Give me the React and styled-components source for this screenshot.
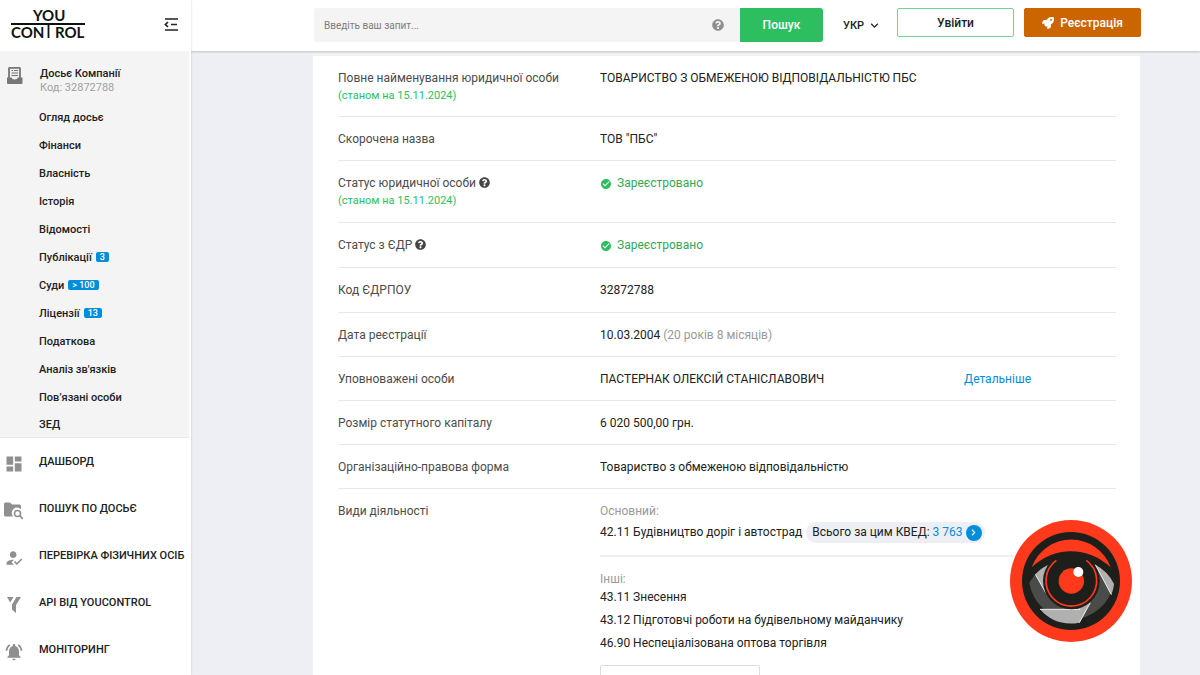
import { useState } from "react";
import styled, { createGlobalStyle } from "styled-components";
import {
  MdCheckCircle,
  MdDashboard,
  MdHowToReg,
  MdKeyboardArrowDown,
  MdNotificationsActive,
} from "react-icons/md";
import { FaChevronRight, FaQuestionCircle, FaRocket } from "react-icons/fa";

const dossierLinks = [
  { label: "Огляд досьє" },
  { label: "Фінанси" },
  { label: "Власність" },
  { label: "Історія" },
  { label: "Відомості" },
  { label: "Публікації", badge: "3" },
  { label: "Суди", badge: "> 100" },
  { label: "Ліцензії", badge: "13" },
  { label: "Податкова" },
  { label: "Аналіз зв'язків" },
  { label: "Пов’язані особи" },
  { label: "ЗЕД" },
];

const menuLinks = [
  { label: "ДАШБОРД", icon: <MdDashboard size={20} /> },
  { label: "ПОШУК ПО ДОСЬЄ", icon: <FolderSearch /> },
  { label: "ПЕРЕВІРКА ФІЗИЧНИХ ОСІБ", icon: <MdHowToReg size={20} /> },
  { label: "API ВІД YOUCONTROL", icon: <ApiIcon /> },
  { label: "МОНІТОРИНГ", icon: <MdNotificationsActive size={20} /> },
];

const otherActivities = [
  "43.11 Знесення",
  "43.12 Підготовчі роботи на будівельному майданчику",
  "46.90 Неспеціалізована оптова торгівля",
];

export default function App() {
  return (
    <>
      <GlobalStyle />
      <Page>
        <Sidebar />
        <Main>
          <Header />
          <Content>
            <CompanyCard />
          </Content>
        </Main>
      </Page>
      <EyeBadge>
        <EyeLogo />
      </EyeBadge>
    </>
  );
}

function Sidebar() {
  return (
    <Aside>
      <SideTop>
        <a href="#home" aria-label="YouControl">
          <Logo />
        </a>
        <IconButton type="button" aria-label="Згорнути меню">
          <CollapseIcon />
        </IconButton>
      </SideTop>
      <Dossier>
        <DossierHead>
          <ArchiveIcon />
          <div>
            <DossierTitle>Досьє Компанії</DossierTitle>
            <DossierCode>Код: 32872788</DossierCode>
          </div>
        </DossierHead>
        {dossierLinks.map((item) => (
          <DossierLink href="#dossier" key={item.label}>
            {item.label}
            {item.badge && <Badge>{item.badge}</Badge>}
          </DossierLink>
        ))}
      </Dossier>
      <Menu>
        {menuLinks.map((item) => (
          <MenuLink href="#menu" key={item.label}>
            <MenuIcon>{item.icon}</MenuIcon>
            {item.label}
          </MenuLink>
        ))}
      </Menu>
    </Aside>
  );
}

function Header() {
  const [query, setQuery] = useState("");

  return (
    <TopBar>
      <SearchForm onSubmit={(e) => e.preventDefault()}>
        <SearchField>
          <SearchInput
            type="text"
            aria-label="Пошук"
            placeholder="Введіть ваш запит..."
            value={query}
            onChange={(e) => setQuery(e.target.value)}
          />
          <FaQuestionCircle size={12} color="#8f8f8f" />
        </SearchField>
        <SearchButton type="submit">Пошук</SearchButton>
      </SearchForm>
      <LangButton type="button">
        УКР
        <MdKeyboardArrowDown size={15} />
      </LangButton>
      <AuthButtons>
        <LoginButton type="button">Увійти</LoginButton>
        <RegisterButton type="button">
          <FaRocket size={12} />
          Реєстрація
        </RegisterButton>
      </AuthButtons>
    </TopBar>
  );
}

function CompanyCard() {
  return (
    <Card>
      <Row>
        <Label>
          Повне найменування юридичної особи
          <Note>(станом на 15.11.2024)</Note>
        </Label>
        <Value>ТОВАРИСТВО З ОБМЕЖЕНОЮ ВІДПОВІДАЛЬНІСТЮ ПБС</Value>
      </Row>
      <Row>
        <Label>Скорочена назва</Label>
        <Value>ТОВ "ПБС"</Value>
      </Row>
      <Row $tall>
        <Label>
          Статус юридичної особи <HelpIcon />
          <Note>(станом на 15.11.2024)</Note>
        </Label>
        <Value>
          <Status />
        </Value>
      </Row>
      <Row $tall>
        <Label>
          Статус з ЄДР <HelpIcon />
        </Label>
        <Value>
          <Status />
        </Value>
      </Row>
      <Row $tall>
        <Label>Код ЄДРПОУ</Label>
        <Value>32872788</Value>
      </Row>
      <Row>
        <Label>Дата реєстрації</Label>
        <Value>
          10.03.2004 <Muted>(20 років 8 місяців)</Muted>
        </Value>
      </Row>
      <Row>
        <Label>Уповноважені особи</Label>
        <SplitValue>
          ПАСТЕРНАК ОЛЕКСІЙ СТАНІСЛАВОВИЧ
          <TextLink href="#details">Детальніше</TextLink>
        </SplitValue>
      </Row>
      <Row>
        <Label>Розмір статутного капіталу</Label>
        <Value>6 020 500,00 грн.</Value>
      </Row>
      <Row>
        <Label>Організаційно-правова форма</Label>
        <Value>Товариство з обмеженою відповідальністю</Value>
      </Row>
      <Row>
        <Label>Види діяльності</Label>
        <Value>
          <MainActivity>
            <Muted>Основний:</Muted>
            <ActivityLine>
              42.11 Будівництво доріг і автострад
              <Pill>
                Всього за цим КВЕД:
                <PillLink href="#kved">
                  3 763
                  <Arrow>
                    <FaChevronRight size={7} />
                  </Arrow>
                </PillLink>
              </Pill>
            </ActivityLine>
          </MainActivity>
          <Muted>Інші:</Muted>
          <ActivityList>
            {otherActivities.map((name) => (
              <li key={name}>{name}</li>
            ))}
          </ActivityList>
          <MoreButton type="button" aria-label="Показати всі" />
        </Value>
      </Row>
    </Card>
  );
}

function Status() {
  return (
    <StatusText>
      <MdCheckCircle size={12} />
      Зареєстровано
    </StatusText>
  );
}

function Logo() {
  return (
    <LogoSvg width="78" height="38" viewBox="0 0 78 38">
      <text x="23" y="15">YOU</text>
      <text x="1" y="32">CON</text>
      <text x="45" y="32">ROL</text>
      <path d="M1 18H75M38.500 18V32" stroke="#111" strokeWidth="1.8" />
    </LogoSvg>
  );
}

function CollapseIcon() {
  return (
    <svg width="14" height="14" viewBox="0 0 14 14" fill="none" stroke="#222" strokeWidth="1.7">
      <path d="M1 1H14M7 6.500H13M1 12H14" />
      <path d="M4 4L1.400 6.500L4 9" />
    </svg>
  );
}

function ArchiveIcon() {
  return (
    <svg width="16" height="18" viewBox="0 0 16 18">
      <path d="M2 11V1.500Q2 .8 2.700 .8H12.300Q13 .8 13 1.500V11" fill="#eee" stroke="#777" strokeWidth="1.800" />
      <path d="M4.500 3.500H6M7 3.500H11M4.500 6H11M4.500 8.500H11" stroke="#777" />
      <path d="M0 10.500H4.500Q5 12.500 7.500 12.500Q10.500 12.500 11 10.500H15.500V16Q15.500 17 14.500 17H1Q0 17 0 16Z" fill="#777" />
    </svg>
  );
}

function FolderSearch() {
  return (
    <svg width="20" height="18" viewBox="0 0 20 18">
      <path d="M0 2Q0 .5 1.500 .5H6L8 2.500H15.500Q17 2.500 17 4V7.200A5.200 5.200 0 0 0 9.200 14.500H1.500Q0 14.500 0 13Z" fill="#8f8f8f" />
      <circle cx="13.500" cy="11.500" r="3" fill="none" stroke="#8f8f8f" strokeWidth="1.600" />
      <path d="M15.700 13.700L18.800 16.800" stroke="#8f8f8f" strokeWidth="1.700" />
    </svg>
  );
}

function ApiIcon() {
  return (
    <svg width="16" height="18" viewBox="0 0 16 18" fill="#8f8f8f">
      <path d="M1 1H7.500L4.200 6.500Z" />
      <path d="M10.500 1H15L10 9V17L6 13.500V8.500Z" />
    </svg>
  );
}

function EyeLogo() {
  return (
    <svg width="122" height="122" viewBox="30 30 366 366" fill="none">
      <circle cx="213" cy="213" r="183" fill="#ff3a1c" />
      <circle cx="213" cy="213" r="147" fill="#1e1e1b" />
      <path d="M95 172A126 126 0 0 1 332 172Q278 124 213 124Q148 124 95 172Z" fill="#ff3a1c" />
      <path d="M88 218Q108 182 145 164L280 163Q322 182 341 220A128 128 0 0 1 88 218Z" fill="#4b4b49" />
      <path d="M106 193Q122 175 143 165L132 200L137 248Z" fill="#b0b0b0" />
      <path d="M286 164Q324 184 342 222Q341 238 334 254Z" fill="#b0b0b0" />
      <path d="M120 298H232L271 278L238 338Q166 351 120 298Z" fill="#b0b0b0" />
      <path d="M106 193L137 248M286 164L334 254M120 298H240M271 278L238 338" stroke="#eee" strokeWidth="3" />
      <circle cx="214" cy="213" r="85" fill="#1e1e1b" />
      <path d="M169 151A76 76 0 1 0 259 151" stroke="#ff3a1c" strokeWidth="5" />
      <circle cx="214" cy="213" r="38" fill="#ff3a1c" />
      <circle cx="235" cy="186" r="15" fill="#fff" />
    </svg>
  );
}

const GlobalStyle = createGlobalStyle`
  * {
    box-sizing: border-box;
  }
  body {
    margin: 0;
    background: #eeeff5;
    color: #212121;
    font-family: Roboto, "Liberation Sans", sans-serif;
    font-size: 12px;
    line-height: 17px;
  }
  a {
    color: inherit;
    text-decoration: none;
  }
  button, input {
    font-family: inherit;
    color: inherit;
  }
  button {
    cursor: pointer;
  }
`;

const Page = styled.div`
  display: flex;
  height: 100vh;
  overflow: hidden;
`;

const Aside = styled.aside`
  flex: 0 0 191px;
  background: #fff;
  box-shadow: 0 0 2px rgba(0, 0, 0, 0.2);
  padding-right: 2px;
  z-index: 2;
`;

const SideTop = styled.div`
  display: flex;
  justify-content: space-between;
  align-items: center;
  height: 51px;
  padding: 0 11px 2px 10px;
`;

const LogoSvg = styled.svg`
  display: block;
  fill: #111;
  font-family: Lato, sans-serif;
  font-size: 15px;
  font-weight: 700;
`;

const IconButton = styled.button`
  display: flex;
  padding: 0;
  border: none;
  background: none;
`;

const Dossier = styled.nav`
  display: flex;
  flex-direction: column;
  background: #f4f4f4;
  border-bottom: 1px solid #e8e8e8;
`;

const DossierHead = styled.div`
  display: grid;
  grid-template-columns: 33px 1fr;
  padding: 16px 0 8px 7px;
`;

const DossierTitle = styled.div`
  font-size: 11px;
  font-weight: 500;
  line-height: 14px;
`;

const DossierCode = styled.div`
  color: #a0a0a0;
  font-size: 11px;
  line-height: 14px;
`;

const DossierLink = styled.a`
  display: flex;
  align-items: center;
  gap: 4px;
  height: 28px;
  padding-left: 39px;
  font-size: 11px;
  font-weight: 500;

  &:last-child {
    height: 26px;
  }
`;

const Badge = styled.span`
  padding: 0 4px;
  border-radius: 2px;
  background: #008edb;
  color: #fff;
  font-size: 9px;
  font-weight: 500;
  line-height: 10px;
`;

const Menu = styled.nav`
  display: flex;
  flex-direction: column;
`;

const MenuLink = styled.a`
  display: grid;
  grid-template-columns: 39px 1fr;
  align-items: center;
  height: 47px;
  font-size: 11px;
  font-weight: 500;
  white-space: nowrap;
`;

const MenuIcon = styled.span`
  display: flex;
  justify-content: center;
  width: 28px;
  padding-top: 4px;
  color: #8f8f8f;
`;

const Main = styled.main`
  flex: 1;
  display: flex;
  flex-direction: column;
  min-width: 0;
`;

const TopBar = styled.header`
  display: flex;
  align-items: flex-start;
  height: 51px;
  padding: 8px 59px 0 123px;
  background: #fff;
  box-shadow: 0 1px 2px rgba(0, 0, 0, 0.2);
  z-index: 1;
`;

const SearchForm = styled.form`
  display: flex;
  flex: 1;
  height: 34px;
`;

const SearchField = styled.div`
  display: flex;
  align-items: center;
  flex: 1;
  padding: 0 16px 0 10px;
  border-radius: 3px 0 0 3px;
  background: #f4f4f4;
`;

const SearchInput = styled.input`
  flex: 1;
  min-width: 0;
  padding: 0;
  border: none;
  outline: none;
  background: none;
  font-size: 10px;

  &::placeholder {
    color: #7c7c7c;
  }
`;

const SearchButton = styled.button`
  width: 83px;
  border: none;
  border-radius: 0 3px 3px 0;
  background: #2dbe60;
  color: #fff;
  font-size: 12px;
  font-weight: 500;
`;

const LangButton = styled.button`
  display: flex;
  align-items: center;
  gap: 3px;
  height: 34px;
  padding: 0;
  margin: 0 15px 0 20px;
  border: none;
  background: none;
  font-size: 11px;
  font-weight: 500;
`;

const AuthButtons = styled.div`
  display: flex;
  gap: 10px;
`;

const LoginButton = styled.button`
  width: 117px;
  height: 29px;
  border: 1px solid #6fd494;
  border-radius: 2px;
  background: #fff;
  font-size: 12px;
  font-weight: 500;
`;

const RegisterButton = styled(LoginButton)`
  display: flex;
  justify-content: center;
  align-items: center;
  gap: 6px;
  border-color: #cb6500;
  background: #cb6500;
  color: #fff;
`;

const Content = styled.div`
  flex: 1;
  min-height: 0;
  padding: 0 60px 0 122px;
  overflow-y: auto;
  scrollbar-width: none;
`;

const Card = styled.section`
  padding: 0 24px 0 25px;
  border-top: 5px solid #f1f1f1;
  background: #fff;
`;

const Row = styled.div`
  display: grid;
  grid-template-columns: 262px 1fr;
  padding: 14px 0 ${(props) => (props.$tall ? "13px" : "12px")};
  border-bottom: 1px solid #e8e8e8;
`;

const Label = styled.div`
  color: #4c4c4c;
`;

const HelpIcon = styled(FaQuestionCircle)`
  width: 11px;
  height: 11px;
  color: #444;
  vertical-align: -1px;
`;

const Note = styled.div`
  color: #2dbe60;
  font-size: 11px;
`;

const Value = styled.div`
  min-width: 0;
`;

const SplitValue = styled(Value)`
  display: flex;
  justify-content: space-between;
  padding-right: 85px;
`;

const Muted = styled.span`
  color: #999;
`;

const TextLink = styled.a`
  color: #008edb;
`;

const StatusText = styled.span`
  display: flex;
  align-items: center;
  gap: 5px;
  color: #2fa85a;

  svg {
    color: #2dbe60;
  }
`;

const MainActivity = styled.div`
  padding-bottom: 12px;
  margin-bottom: 14px;
  border-bottom: 2px solid #f0f0f0;
`;

const ActivityLine = styled.div`
  display: flex;
  align-items: center;
  gap: 4px;
  margin-top: 2px;
`;

const Pill = styled.span`
  display: flex;
  align-items: center;
  gap: 3px;
  height: 21px;
  padding: 0 3px 0 6px;
  border-radius: 11px;
  background: #eeeff5;
`;

const PillLink = styled.a`
  display: flex;
  align-items: center;
  gap: 3px;
  color: #008edb;
`;

const Arrow = styled.span`
  display: flex;
  justify-content: center;
  align-items: center;
  width: 16px;
  height: 16px;
  border-radius: 50%;
  background: #008edb;
  color: #fff;
`;

const ActivityList = styled.ul`
  display: flex;
  flex-direction: column;
  gap: 6px;
  margin: 1px 0 13px;
  padding: 0;
  list-style: none;
`;

const MoreButton = styled.button`
  width: 160px;
  height: 32px;
  border: 1px solid #ddd;
  border-radius: 2px;
  background: #fff;
`;

const EyeBadge = styled.div`
  position: fixed;
  right: 68px;
  bottom: 33px;
  z-index: 3;

  svg {
    display: block;
  }
`;
